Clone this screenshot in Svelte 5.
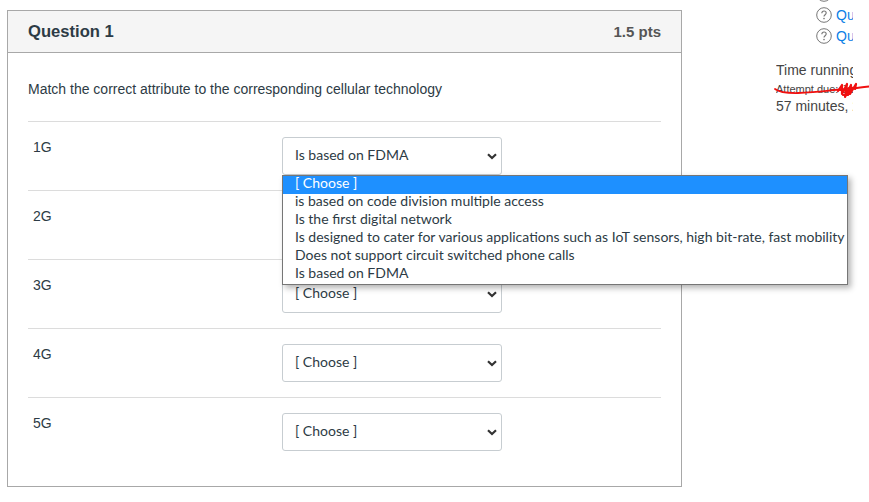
<script>
  const choose = '[ Choose ]';
  const fdma = 'Is based on FDMA';

  const options = [
    choose,
    'is based on code division multiple access',
    'Is the first digital network',
    'Is designed to cater for various applications such as IoT sensors, high bit-rate, fast mobility',
    'Does not support circuit switched phone calls',
    fdma
  ];

  const rows = [
    { label: '1G', value: fdma },
    { label: '2G', value: choose },
    { label: '3G', value: choose },
    { label: '4G', value: choose },
    { label: '5G', value: choose }
  ];
</script>

<div class="page">
  <section class="card">
    <header class="card-head">
      <h2>Question 1</h2>
      <span class="pts">1.5 pts</span>
    </header>

    <div class="card-body">
      <p class="prompt">Match the correct attribute to the corresponding cellular technology</p>

      {#each rows as row}
        <div class="row">
          <div class="label">{row.label}</div>
          <select class="answer" value={row.value}>
            {#each options as option}
              <option value={option}>{option}</option>
            {/each}
          </select>
        </div>
      {/each}
    </div>
  </section>

  <aside class="side">
    <ul class="links">
      {#each [0, 1, 2] as i}
        <li>
          <svg width="16" height="16" viewBox="0 0 16 16" aria-hidden="true">
            <circle cx="8" cy="8" r="7.3" fill="none" stroke="#777" stroke-width="1" />
            <path d="M5.8 6.200C5.900 4.800 6.800 4 8 4c1.300 0 2.200.8 2.200 2 0 1.700-2.200 1.800-2.200 3.600" fill="none" stroke="#777" stroke-width="1.100" />
            <circle cx="8" cy="11.600" r=".8" fill="#777" />
          </svg>
          {#if i > 0}
            <span class="link">Quiz</span>
          {/if}
        </li>
      {/each}
    </ul>
    <div class="time">Time running out</div>
    <div class="due">Attempt due: Jan</div>
    <div class="time left">57 minutes, 20 sec</div>
  </aside>

  <ul class="menu">
    {#each options as option, i}
      <li class:active={i === 0}>{option}</li>
    {/each}
  </ul>

  <svg class="scribble" width="96" height="18" viewBox="0 0 96 18" aria-hidden="true">
    <g fill="none" stroke="#f01010" stroke-linecap="round" stroke-linejoin="round">
      <path d="M1 8C5 11 14 12.200 24 12C38 11.800 52 10 66 8.500" stroke-width="1.800" />
      <path d="M80 7.500C85 6.500 90 6 95 5.500" stroke-width="1.800" />
      <path d="M64 10L68 4L68 13L73 3L71 16L77 4L76 13L82 3L81 8M66 9L81 6M69 14L74 14L77 9" stroke-width="2.200" />
    </g>
  </svg>
</div>

<style>
  :global(body) {
    background: #fff;
    font-family: "Liberation Sans", Arial, sans-serif;
    color: #2d3b45;
  }

  .page {
    position: relative;
    display: flex;
    align-items: flex-start;
    width: 869px;
    height: 502px;
    overflow: hidden;
  }

  .card {
    box-sizing: border-box;
    flex: none;
    width: 675px;
    height: 477px;
    margin: 10px 0 0 7px;
    border: 1px solid #a8a8a8;
    background: #fff;
  }

  .card-head {
    display: flex;
    align-items: center;
    justify-content: space-between;
    box-sizing: border-box;
    height: 42px;
    padding: 0 20px;
    background: #f5f5f5;
    border-bottom: 1px solid #a8a8a8;
  }

  h2 {
    margin: 0;
    font-size: 16.6px;
    font-weight: 700;
    color: #2d3b45;
  }

  .pts {
    font-size: 15px;
    font-weight: 700;
    color: #555;
  }

  .card-body {
    padding: 0 20px;
  }

  .prompt {
    margin: 0;
    height: 68px;
    box-sizing: border-box;
    padding-top: 28px;
    font-size: 14px;
    line-height: 17px;
  }

  .row {
    display: flex;
    box-sizing: border-box;
    height: 69px;
    padding-top: 15px;
    border-top: 1px solid #dcdcdc;
  }

  .label {
    width: 254px;
    padding: 2px 0 0 5px;
    box-sizing: border-box;
    font-size: 14px;
    line-height: 16px;
  }

  .answer {
    appearance: none;
    box-sizing: border-box;
    width: 220px;
    height: 38px;
    padding: 0 24px 4px 12px;
    background-color: #fff;
    background-image: url("data:image/svg+xml,%3Csvg xmlns='http://www.w3.org/2000/svg' width='10' height='7'%3E%3Cpath d='M1 1.200L5 5L9 1.200' fill='none' stroke='%23333' stroke-width='2.200'/%3E%3C/svg%3E");
    background-repeat: no-repeat;
    background-position: 204px 15px;
    border: 1px solid #c7cdd1;
    border-radius: 3px;
    font-family: Lato, sans-serif;
    font-size: 14px;
    color: #2d3b45;
  }

  .side {
    flex: none;
    width: 77px;
    margin-left: 94px;
    margin-top: -17px;
    overflow: hidden;
    white-space: nowrap;
    font-size: 14px;
    color: #444;
  }

  .links {
    list-style: none;
    margin: 0;
    padding: 0 0 0 40px;
  }

  .links li {
    display: flex;
    align-items: center;
    gap: 4px;
    height: 21px;
  }

  .links svg {
    flex: none;
  }

  .link {
    color: #0a7ee6;
  }

  .time {
    line-height: 17px;
  }

  .links + .time {
    margin-top: 16px;
  }

  .due {
    margin-top: 3px;
    font-size: 11px;
    line-height: 14px;
  }

  .left {
    margin-top: 2px;
  }

  .menu {
    position: absolute;
    left: 282px;
    top: 175px;
    box-sizing: border-box;
    width: 566px;
    margin: 0;
    padding: 0;
    list-style: none;
    background: #fff;
    border: 1px solid #767676;
    box-shadow: 3px 3px 6px rgba(0, 0, 0, 0.3);
    font-family: Lato, sans-serif;
    font-size: 14px;
    color: #2d3b45;
  }

  .menu li {
    height: 18px;
    padding-left: 12px;
    line-height: 14px;
    white-space: nowrap;
  }

  .menu li.active {
    background: #1e90ff;
    color: #fff;
  }

  .scribble {
    position: absolute;
    left: 774px;
    top: 81px;
  }
</style>
